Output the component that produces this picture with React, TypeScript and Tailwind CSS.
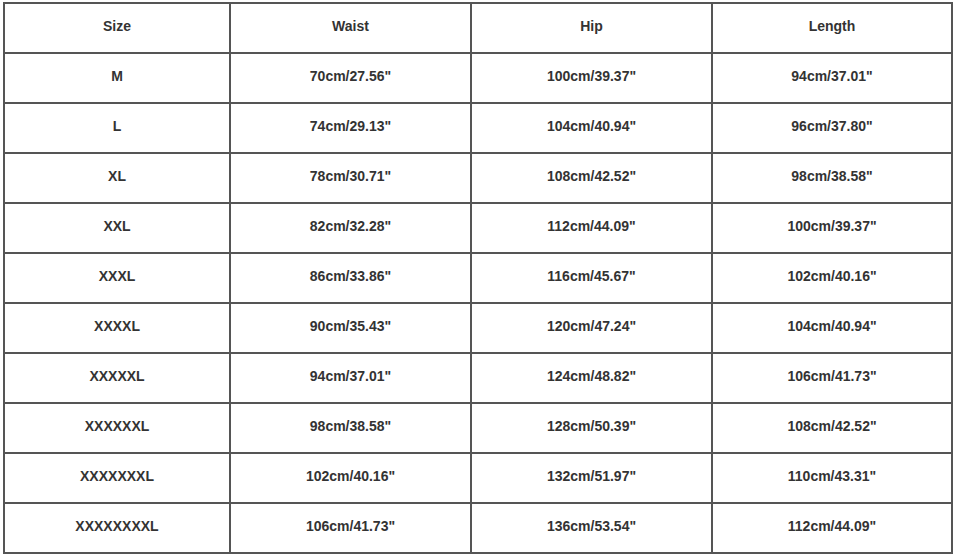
const rows = [
  ['M', '70cm/27.56"', '100cm/39.37"', '94cm/37.01"'],
  ['L', '74cm/29.13"', '104cm/40.94"', '96cm/37.80"'],
  ['XL', '78cm/30.71"', '108cm/42.52"', '98cm/38.58"'],
  ['XXL', '82cm/32.28"', '112cm/44.09"', '100cm/39.37"'],
  ['XXXL', '86cm/33.86"', '116cm/45.67"', '102cm/40.16"'],
  ['XXXXL', '90cm/35.43"', '120cm/47.24"', '104cm/40.94"'],
  ['XXXXXL', '94cm/37.01"', '124cm/48.82"', '106cm/41.73"'],
  ['XXXXXXL', '98cm/38.58"', '128cm/50.39"', '108cm/42.52"'],
  ['XXXXXXXL', '102cm/40.16"', '132cm/51.97"', '110cm/43.31"'],
  ['XXXXXXXXL', '106cm/41.73"', '136cm/53.54"', '112cm/44.09"'],
];

const headers = ['Size', 'Waist', 'Hip', 'Length'];

export default function App() {
  return (
    <div className="w-[954px] h-[556px] bg-white pl-[3px] pt-[2px] font-['Liberation_Sans',Arial,sans-serif] text-[#333]">
      <table className="w-[948px] border-collapse table-fixed text-center text-[14px] font-bold">
        <colgroup>
          <col className="w-[226px]" />
          <col className="w-[241px]" />
          <col className="w-[241px]" />
          <col className="w-[240px]" />
        </colgroup>
        <thead>
          <tr className="h-[50px]">
            {headers.map((h) => (
              <th key={h} className="border-2 border-[#555] pb-[4px] font-bold">
                {h}
              </th>
            ))}
          </tr>
        </thead>
        <tbody>
          {rows.map((r) => (
            <tr key={r[0]} className="h-[50px]">
              {r.map((c, i) => (
                <td key={i} className="border-2 border-[#555] pb-[4px]">
                  {c}
                </td>
              ))}
            </tr>
          ))}
        </tbody>
      </table>
    </div>
  );
}
